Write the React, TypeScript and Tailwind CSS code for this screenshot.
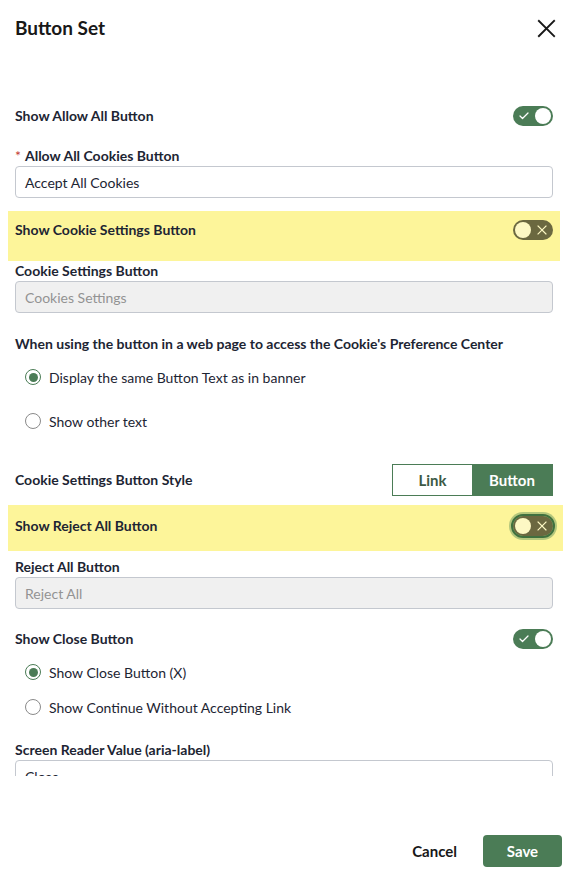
import { Check } from "lucide-react";

const green = "bg-[#4b7c56]";

function Cross({ className, stroke = 2 }: { className?: string; stroke?: number }) {
  return (
    <svg viewBox="0 0 20 20" className={className} fill="none" stroke="currentColor" strokeWidth={stroke} strokeLinecap="square">
      <path d="M2 2 L18 18 M18 2 L2 18" />
    </svg>
  );
}

function Toggle({ on, focus }: { on: boolean; focus?: boolean }) {
  if (on) {
    return (
      <div className={`relative w-[40px] h-[20px] rounded-full ${green} flex items-center`}>
        <Check className="absolute left-[5px] w-[12px] h-[12px] text-white" strokeWidth={2.5} />
        <div className="absolute right-[2px] w-[16px] h-[16px] rounded-full bg-white" />
      </div>
    );
  }
  return (
    <div
      className={`relative w-[40px] h-[20px] rounded-full bg-[#6b6840] flex items-center ${
        focus ? "outline-2 outline-[#40703f] shadow-[0_0_0_4px_rgba(120,160,100,0.55)]" : ""
      }`}
    >
      <div className="absolute left-[2px] w-[16px] h-[16px] rounded-full bg-[#fdf8c4]" />
      <Cross className="absolute right-[6px] w-[10px] h-[10px] text-[#fdf8c4]" stroke={2.2} />
    </div>
  );
}

function Radio({ checked, label }: { checked: boolean; label: string }) {
  return (
    <div className="flex items-center h-[20px] pl-[10px]">
      <div
        className={`w-[16px] h-[16px] rounded-full border flex items-center justify-center ${
          checked ? "border-[#4b7c56]" : "border-[#8a8a8a]"
        }`}
      >
        {checked && <div className={`w-[9px] h-[9px] rounded-full ${green}`} />}
      </div>
      <span className="ml-[8px] text-[14px] text-[#1d2533]">{label}</span>
    </div>
  );
}

function Field({ value, disabled }: { value: string; disabled?: boolean }) {
  return (
    <div
      className={`h-[32px] rounded-[4px] border flex items-center px-[9px] text-[14px] ${
        disabled
          ? "bg-[#f0f0f0] border-[#c4c8cf] text-[#939393]"
          : "bg-white border-[#c4c8cf] text-[#1d2533]"
      }`}
    >
      {value}
    </div>
  );
}

function Label({ children }: { children: React.ReactNode }) {
  return <div className="h-[20px] leading-[20px] text-[14px] font-bold text-[#1d2533]">{children}</div>;
}

export default function App() {
  return (
    <div className="w-[582px] h-[884px] bg-white" style={{ fontFamily: "Lato, 'Noto Sans', sans-serif" }}>
      <div className="h-[776px] overflow-hidden pl-[15px] pr-[29px]">
        <div className="h-[56px] flex items-center justify-between">
          <h1 className="text-[19px] font-bold text-[#181818]">Button Set</h1>
          <Cross className="w-[19px] h-[19px] text-[#181818] mr-[-3px]" stroke={2} />
        </div>

        <div className="mt-[50px] flex items-center justify-between">
          <Label>Show Allow All Button</Label>
          <Toggle on />
        </div>

        <div className="mt-[20px]">
          <Label>
            <span className="text-[#c23934] font-normal mr-[4px]">*</span>Allow All Cookies Button
          </Label>
          <Field value="Accept All Cookies" />
        </div>

        <div className="mt-[13px] -mx-[7px] px-[7px] pt-[9px] pb-[21px] bg-[#fdf59a] flex items-center justify-between">
          <Label>Show Cookie Settings Button</Label>
          <Toggle on={false} />
        </div>

        <div>
          <Label>Cookie Settings Button</Label>
          <Field value="Cookies Settings" disabled />
        </div>

        <div className="mt-[21px]">
          <Label>When using the button in a web page to access the Cookie's Preference Center</Label>
        </div>
        <div className="mt-[13px]">
          <Radio checked label="Display the same Button Text as in banner" />
        </div>
        <div className="mt-[24px]">
          <Radio checked={false} label="Show other text" />
        </div>

        <div className="mt-[33px] flex items-center justify-between">
          <Label>Cookie Settings Button Style</Label>
          <div className="flex h-[32px] border border-[#4b7c56]">
            <div className="w-[79px] flex items-center justify-center text-[15px] font-bold text-[#3d5a45] bg-white">
              Link
            </div>
            <div className={`w-[80px] flex items-center justify-center text-[15px] font-bold text-white ${green}`}>
              Button
            </div>
          </div>
        </div>

        <div className="mt-[9px] -ml-[7px] -mr-[10px] pl-[7px] pr-[10px] pt-[11px] pb-[15px] bg-[#fdf59a] flex items-center justify-between">
          <Label>Show Reject All Button</Label>
          <Toggle on={false} focus />
        </div>

        <div className="mt-[6px]">
          <Label>Reject All Button</Label>
          <Field value="Reject All" disabled />
        </div>

        <div className="mt-[20px] flex items-center justify-between">
          <Label>Show Close Button</Label>
          <Toggle on />
        </div>
        <div className="mt-[13px]">
          <Radio checked label="Show Close Button (X)" />
        </div>
        <div className="mt-[15px]">
          <Radio checked={false} label="Show Continue Without Accepting Link" />
        </div>

        <div className="mt-[23px]">
          <Label>Screen Reader Value (aria-label)</Label>
          <Field value="Close" />
        </div>
      </div>

      <div className="flex justify-end items-center pr-[20px] mt-[59px] gap-[8px]">
        <button className="h-[32px] px-[18px] text-[15px] font-bold text-[#181818]">Cancel</button>
        <button className={`h-[32px] w-[79px] rounded-[4px] text-[15px] font-bold text-white ${green}`}>
          Save
        </button>
      </div>
    </div>
  );
}
